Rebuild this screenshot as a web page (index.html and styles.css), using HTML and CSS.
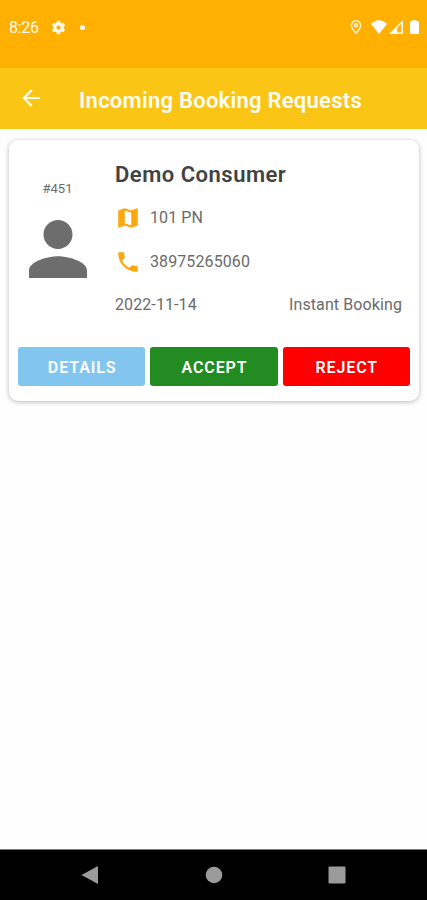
FILE: index.html
```
<!DOCTYPE html>
<html lang="en">
<head>
    <meta charset="UTF-8">
    <meta name="viewport" content="width=device-width, initial-scale=1.0">
    <title>Incoming Booking Requests</title>
    <link rel="stylesheet" href="styles.css">
</head>
<body>
    <div class="status-bar">
        <span class="clock">8:26</span>
        <svg class="gear" viewBox="0 0 24 24"><path d="M19.14 12.94c.04-.3.06-.61.06-.94 0-.32-.02-.64-.07-.94l2.03-1.58a.49.49 0 0 0 .12-.61l-1.92-3.32a.488.488 0 0 0-.59-.22l-2.39.96c-.5-.38-1.03-.7-1.62-.94l-.36-2.54a.484.484 0 0 0-.48-.41h-3.84c-.24 0-.43.17-.47.41l-.36 2.54c-.59.24-1.13.57-1.62.94l-2.39-.96c-.22-.08-.47 0-.59.22L2.74 8.87c-.12.21-.08.47.12.61l2.03 1.58c-.05.3-.09.63-.09.94s.02.64.07.94l-2.03 1.58a.49.49 0 0 0-.12.61l1.92 3.32c.12.22.37.29.59.22l2.39-.96c.5.38 1.03.7 1.62.94l.36 2.54c.05.24.24.41.48.41h3.84c.24 0 .44-.17.47-.41l.36-2.54c.59-.24 1.13-.56 1.62-.94l2.39.96c.22.08.47 0 .59-.22l1.92-3.32c.12-.22.07-.47-.12-.61l-2.01-1.58zM12 15A3 3 0 1 1 12 9a3 3 0 0 1 0 6z"/></svg>
        <span class="dot"></span>
        <div class="status-icons">
            <svg class="pin" viewBox="0 0 12 14"><path d="M6 .7a4.600 4.600 0 0 0-4.600 4.600C1.400 8.500 6 13.200 6 13.200s4.600-4.700 4.600-7.900A4.600 4.600 0 0 0 6 .7z"/><circle cx="6" cy="5.300" r="1.500"/></svg>
            <svg class="wifi" viewBox="0 0 16 14"><path d="M8 14 0 4C2.200 1.500 5 .2 8 .2S13.800 1.500 16 4z"/></svg>
            <svg class="signal" viewBox="0 0 14 14"><path fill-rule="evenodd" d="M0 14 14 0v14zM8.200 12.600h4.300V3.500l-4.300 4.300z"/></svg>
            <svg class="battery" viewBox="0 0 9 14"><path d="M2.500 1.300V0h4v1.300H8a1 1 0 0 1 1 1V13a1 1 0 0 1-1 1H1a1 1 0 0 1-1-1V2.300a1 1 0 0 1 1-1z"/></svg>
        </div>
    </div>

    <div class="app-bar">
        <svg class="back" viewBox="0 0 24 24"><path d="M20 11H7.830l5.590-5.590L12 4l-8 8 8 8 1.410-1.410L7.830 13H20v-2z"/></svg>
        <h1>Incoming Booking Requests</h1>
    </div>

    <div class="content">
        <div class="card">
            <div class="request">
                <div class="user">
                    <span class="booking-id">#451</span>
                    <svg class="avatar" viewBox="4 4 16 16"><path d="M12 12c2.210 0 4-1.790 4-4s-1.790-4-4-4-4 1.790-4 4 1.790 4 4 4zm0 2c-2.670 0-8 1.340-8 4v2h16v-2c0-2.660-5.330-4-8-4z"/></svg>
                </div>
                <div class="info">
                    <h2>Demo Consumer</h2>
                    <div class="row">
                        <svg viewBox="0 0 24 24"><path d="M20.500 3l-.16.030L15 5.100 9 3 3.360 4.900c-.21.070-.36.250-.36.480V20.500c0 .280.220.500.500.500l.16-.030L9 18.900l6 2.100 5.640-1.900c.210-.070.360-.250.360-.480V3.500c0-.280-.220-.500-.500-.500zM15 19l-6-2.110V5l6 2.110V19z"/></svg>
                        <span class="address">101 PN</span>
                    </div>
                    <div class="row">
                        <svg viewBox="0 0 24 24"><path d="M6.620 10.790c1.440 2.830 3.760 5.140 6.590 6.590l2.200-2.200c.270-.270.670-.360 1.020-.240 1.120.370 2.330.570 3.570.570.550 0 1 .450 1 1V20c0 .550-.450 1-1 1-9.390 0-17-7.610-17-17 0-.550.450-1 1-1h3.500c.550 0 1 .450 1 1 0 1.250.200 2.450.570 3.570.110.350.030.740-.250 1.020l-2.200 2.200z"/></svg>
                        <span class="phone">38975265060</span>
                    </div>
                    <div class="meta">
                        <span class="date">2022-11-14</span>
                        <span class="type">Instant Booking</span>
                    </div>
                </div>
            </div>
            <div class="actions">
                <button class="details">DETAILS</button>
                <button class="accept">ACCEPT</button>
                <button class="reject">REJECT</button>
            </div>
        </div>
    </div>

    <div class="nav-bar">
        <svg viewBox="0 0 18 18"><path d="M.5 9 17 0v18z"/></svg>
        <svg viewBox="0 0 18 18"><circle cx="9" cy="9" r="8.300"/></svg>
        <svg viewBox="0 0 18 18"><rect x=".5" y=".5" width="17" height="17" rx="1"/></svg>
    </div>
</body>
</html>
```
FILE: styles.css
```
* {
    box-sizing: border-box;
}

body {
    margin: 0;
    height: 900px;
    display: flex;
    flex-direction: column;
    font-family: Roboto, 'Liberation Sans', sans-serif;
    background-color: #fefefe;
    color: #6b6b6b;
    overflow: hidden;
}

svg {
    display: block;
    flex: none;
    fill: currentColor;
}

h1, h2 {
    margin: 0;
    font-weight: 600;
    white-space: nowrap;
}

.status-bar {
    height: 68px;
    padding: 17px 8px 31px 9px;
    display: flex;
    align-items: center;
    background-color: #ffb000;
    color: #fffaf0;
}

.clock {
    width: 41px;
    font-size: 16px;
    line-height: 20px;
    padding-top: 2px;
    letter-spacing: -0.3px;
}

.gear {
    width: 17px;
    height: 17px;
}

.dot {
    width: 5px;
    height: 5px;
    margin-left: 13px;
    border-radius: 50%;
    background-color: #fffaf0;
}

.status-icons {
    margin-left: auto;
    display: flex;
    color: #ffffff;
}

.pin {
    width: 12px;
    height: 14px;
    margin-right: 9px;
    fill: none;
    stroke: #fff3d6;
    stroke-width: 1.5;
}

.wifi {
    width: 16px;
    height: 14px;
    margin-right: 2px;
}

.signal {
    width: 14px;
    height: 14px;
    margin-right: 7px;
}

.battery {
    width: 9px;
    height: 14px;
}

.app-bar {
    height: 61px;
    padding: 0 18px 1px;
    display: flex;
    align-items: center;
    background-color: #fbc516;
    color: #fffdf5;
}

.back {
    width: 26px;
    height: 26px;
    margin-right: 35px;
}

.app-bar h1 {
    font-size: 22px;
    padding-top: 4px;
    letter-spacing: 0.26px;
}

.content {
    flex: 1;
    padding: 11px 8px 0 9px;
}

.card {
    height: 261px;
    padding: 0 9px;
    border-radius: 9px;
    background-color: #ffffff;
    box-shadow: 0 1px 5px rgba(0, 0, 0, 0.28);
}

.request {
    height: 207px;
    display: flex;
}

.user {
    width: 97px;
    padding: 41px 18px 0 0;
    display: flex;
    flex-direction: column;
    align-items: center;
}

.booking-id {
    font-size: 13px;
    line-height: 16px;
}

.avatar {
    width: 58px;
    height: 58px;
    margin-top: 23px;
    color: #6d6d6d;
}

.info {
    flex: 1;
    padding-top: 20px;
}

.info h2 {
    font-size: 22px;
    line-height: 30px;
    letter-spacing: 0.5px;
    color: #424242;
}

.row {
    height: 44px;
    display: flex;
    align-items: center;
    font-size: 16px;
    letter-spacing: 0.1px;
}

.info h2 + .row {
    margin-top: 6px;
}

.row svg {
    width: 26px;
    height: 26px;
    margin-right: 9px;
    color: #fba70d;
}

.row span {
    padding-bottom: 2px;
}

.meta {
    height: 40px;
    padding-right: 8px;
    display: flex;
    align-items: center;
    justify-content: space-between;
    font-size: 16px;
    letter-spacing: 0.1px;
}

.actions {
    display: grid;
    grid-template-columns: repeat(3, 1fr);
    gap: 5px;
}

button {
    height: 39px;
    padding: 2px 0 0 1px;
    border: none;
    border-radius: 3px;
    font-family: inherit;
    font-size: 16px;
    font-weight: 600;
    letter-spacing: 0.9px;
    color: #ffffff;
    cursor: pointer;
}

.details {
    background-color: #82c6ef;
}

.accept {
    background-color: #228b22;
}

.reject {
    background-color: #ff0000;
}

.nav-bar {
    height: 51px;
    padding: 0 81px;
    display: flex;
    align-items: center;
    justify-content: space-between;
    border-top: 1px solid #777777;
    background-color: #000000;
    color: #9b9b9b;
}

.nav-bar svg {
    width: 18px;
    height: 18px;
}
```
